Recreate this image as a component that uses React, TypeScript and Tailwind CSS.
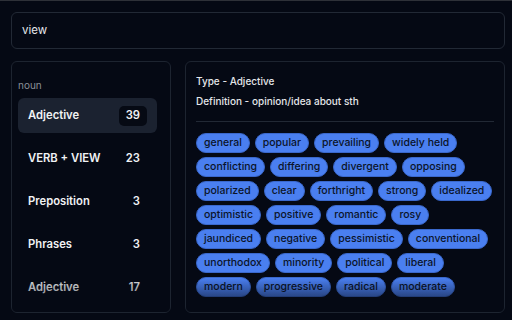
const categories = [
  { label: 'Adjective', count: 39, active: true },
  { label: 'VERB + VIEW', count: 23 },
  { label: 'Preposition', count: 3 },
  { label: 'Phrases', count: 3 },
  { label: 'Adjective', count: 17 },
];

const words = [
  'general', 'popular', 'prevailing', 'widely held',
  'conflicting', 'differing', 'divergent', 'opposing',
  'polarized', 'clear', 'forthright', 'strong', 'idealized',
  'optimistic', 'positive', 'romantic', 'rosy',
  'jaundiced', 'negative', 'pessimistic', 'conventional',
  'unorthodox', 'minority', 'political', 'liberal',
  'modern', 'progressive', 'radical', 'moderate',
];

export default function App() {
  return (
    <div className="w-[512px] h-[320px] overflow-hidden bg-[#050914] border-t border-[#2e3138] font-['Inter',sans-serif] pl-[11px] pr-[7px] pt-[11px] flex flex-col">
      {/* Search */}
      <div className="h-[37px] shrink-0 rounded-[6px] border border-[#222935] flex items-center px-[10px]">
        <span className="text-[11.5px] text-[#e4e6ea]">view</span>
      </div>

      <div className="flex gap-[14px] mt-[12px] h-[252px]">
        {/* Left list */}
        <div className="relative w-[160px] shrink-0 rounded-[6px] border border-[#1d2430] pl-[6px] pr-[13px] pt-[16px] overflow-hidden">
          <p className="text-[10px] leading-[14px] text-[#8a8f98] mb-[6px]">noun</p>
          <div className="flex flex-col gap-[8px]">
            {categories.map((c, i) => (
              <div
                key={i}
                className={`h-[35px] shrink-0 rounded-[6px] flex items-center justify-between pl-[10px] ${
                  c.active ? 'bg-[#1b2230]' : ''
                }`}
              >
                <span className="text-[11.25px] font-semibold text-[#f1f2f4]">{c.label}</span>
                <span
                  className={`h-[20px] rounded-[5px] px-[7px] mr-[10px] flex items-center text-[11.25px] font-semibold text-[#f1f2f4] ${
                    c.active ? 'bg-[#060a14]' : ''
                  }`}
                >
                  {c.count}
                </span>
              </div>
            ))}
          </div>
          <div className="absolute left-0 right-0 bottom-0 h-[40px] bg-gradient-to-b from-transparent to-[#050914]/70 pointer-events-none" />
        </div>

        {/* Right detail */}
        <div className="relative flex-1 rounded-[6px] border border-[#1d2430] px-[10px] pt-[11px] overflow-hidden">
          <p className="text-[10px] leading-[16px] font-medium text-[#e4e6ea]">Type - Adjective</p>
          <p className="text-[10px] leading-[16px] font-medium text-[#e4e6ea] mt-[4px]">
            Definition - opinion/idea about sth
          </p>
          <div className="h-px bg-[#222935] mt-[12px] mb-[11px]" />
          <div className="flex flex-wrap gap-x-[5px] gap-y-[4px]">
            {words.map((w) => (
              <span
                key={w}
                className="h-[20px] rounded-full bg-[#4a7ff0] border border-[#3a68cc] px-[7px] flex items-center text-[10.5px] font-medium text-[#0b1429]"
              >
                {w}
              </span>
            ))}
          </div>
          <div className="absolute left-0 right-0 bottom-0 h-[34px] bg-gradient-to-b from-transparent via-[#050914]/45 to-[#050914]/60 pointer-events-none" />
        </div>
      </div>
    </div>
  );
}
